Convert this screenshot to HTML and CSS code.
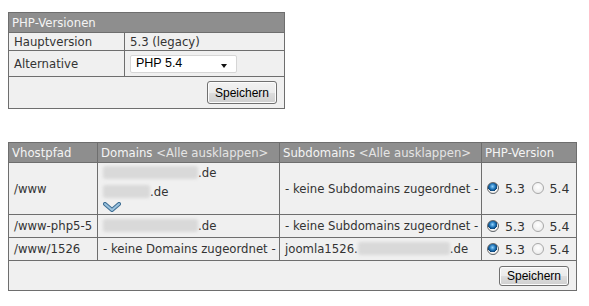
FILE: index.html
```html
<!DOCTYPE html>
<html lang="de">
<head>
    <meta charset="UTF-8">
    <title>PHP-Versionen</title>
    <link rel="stylesheet" href="styles.css">
</head>
<body>

    <table class="grid versions">
        <colgroup>
            <col class="v-label">
            <col class="v-value">
        </colgroup>
        <tr class="head">
            <th colspan="2">PHP-Versionen</th>
        </tr>
        <tr class="row-main">
            <td>Hauptversion</td>
            <td>5.3 (legacy)</td>
        </tr>
        <tr class="row-alt">
            <td>Alternative</td>
            <td>
                <div class="select">
                    <span>PHP 5.4</span>
                    <span class="caret"></span>
                </div>
            </td>
        </tr>
        <tr class="foot">
            <td colspan="2"><button class="btn">Speichern</button></td>
        </tr>
    </table>

    <table class="grid vhosts">
        <colgroup>
            <col class="c-path">
            <col class="c-dom">
            <col class="c-sub">
            <col class="c-php">
        </colgroup>
        <tr class="head">
            <th>Vhostpfad</th>
            <th>Domains <span class="toggle">&lt;Alle ausklappen&gt;</span></th>
            <th>Subdomains <span class="toggle">&lt;Alle ausklappen&gt;</span></th>
            <th>PHP-Version</th>
        </tr>
        <tr class="row-big">
            <td>/www</td>
            <td>
                <div class="dom"><span class="blur w95"></span>.de</div>
                <div class="dom"><span class="blur w47"></span>.de</div>
                <svg class="more" width="18" height="10" viewBox="0 0 18 10">
                    <path d="M2 2 L9 8 L16 2" fill="none" stroke="#3f6f94" stroke-width="4.2" stroke-linejoin="round" stroke-linecap="round"/>
                    <path d="M2 2 L9 8 L16 2" fill="none" stroke="#9cc3df" stroke-width="2" stroke-linejoin="round" stroke-linecap="round"/>
                </svg>
            </td>
            <td>- keine Subdomains zugeordnet -</td>
            <td>
                <label class="opt"><input type="radio" name="v1" checked> 5.3</label>
                <label class="opt"><input type="radio" name="v1"> 5.4</label>
            </td>
        </tr>
        <tr class="row">
            <td>/www-php5-5</td>
            <td><span class="blur w95"></span>.de</td>
            <td>- keine Subdomains zugeordnet -</td>
            <td>
                <label class="opt"><input type="radio" name="v2" checked> 5.3</label>
                <label class="opt"><input type="radio" name="v2"> 5.4</label>
            </td>
        </tr>
        <tr class="row">
            <td>/www/1526</td>
            <td>- keine Domains zugeordnet -</td>
            <td>joomla1526.<span class="blur w92"></span>.de</td>
            <td>
                <label class="opt"><input type="radio" name="v3" checked> 5.3</label>
                <label class="opt"><input type="radio" name="v3"> 5.4</label>
            </td>
        </tr>
        <tr class="foot">
            <td colspan="4"><button class="btn">Speichern</button></td>
        </tr>
    </table>

</body>
</html>
```

FILE: styles.css
```css
body {
    margin: 12px 8px 8px 8px;
    font-family: "DejaVu Sans", Verdana, sans-serif;
    font-size: 11.7px;
    color: #333;
    background: #fff;
}

.grid {
    border-collapse: collapse;
    table-layout: fixed;
    background: #f0f0f0;
    border: 1px solid #6e6e6e;
}

.grid td, .grid th {
    border: 1px solid #6e6e6e;
    padding: 0 5px;
    text-align: left;
    font-weight: normal;
    white-space: nowrap;
}

.grid .head th {
    background: #8e8e8e;
    color: #f4f4f4;
    height: 19px;
    padding: 0 3px;
}

.toggle {
    color: #e4e4e4;
}

.grid .foot td {
    text-align: right;
    padding-right: 7px;
}

/* top box */
.versions {
    width: 276px;
    margin-bottom: 33px;
}

.v-label { width: 116px; }
.v-value { width: 160px; }

.row-main td {
    height: 17px;
}

.row-alt td {
    height: 25px;
}

.versions .foot td {
    height: 31px;
}

.select {
    position: relative;
    width: 107px;
    height: 18px;
    box-sizing: border-box;
    background: #fff;
    border: 1px solid #d6d6d6;
    border-radius: 2px;
    font-family: "Liberation Sans", Arial, sans-serif;
    font-size: 12.5px;
    color: #000;
    line-height: 15px;
    padding-left: 5px;
}

.caret {
    position: absolute;
    right: 9px;
    top: 8px;
    border-left: 3.5px solid transparent;
    border-right: 3.5px solid transparent;
    border-top: 4px solid #111;
}

.btn {
    width: 70px;
    height: 23px;
    font-family: "Liberation Sans", Arial, sans-serif;
    font-size: 12px;
    color: #000;
    border: 1px solid #707070;
    border-radius: 3px;
    background: linear-gradient(#f2f2f2 0%, #ebebeb 50%, #dddddd 51%, #cfcfcf 100%);
    box-shadow: inset 0 0 0 1px #fcfcfc;
    padding: 0;
    vertical-align: middle;
}

/* vhost table */
.vhosts {
    width: 568px;
}

.c-path { width: 89px; }
.c-dom { width: 182px; }
.c-sub { width: 202px; }
.c-php { width: 95px; }

.row-big td {
    height: 51px;
}

.row td {
    height: 22px;
}

.vhosts .foot td {
    height: 29px;
}

.vhosts .foot .btn {
    height: 20px;
}

.dom {
    height: 19px;
    line-height: 19px;
}

.more {
    display: block;
    margin: 0 0 2px 0;
}

.blur {
    display: inline-block;
    height: 13px;
    vertical-align: -2px;
    background: #d9d9d9;
    border-radius: 3px;
    filter: blur(1.5px);
}

.w95 { width: 95px; }
.w47 { width: 47px; }
.w92 { width: 92px; }

.opt {
    margin-right: 3px;
    font-size: 12.5px;
    color: #333;
}

.opt input {
    appearance: none;
    -webkit-appearance: none;
    width: 12px;
    height: 12px;
    margin: 0 2px 0 0;
    vertical-align: -1px;
    border-radius: 50%;
    border: 1px solid #a8a8a8;
    background: radial-gradient(circle at 50% 40%, #ffffff 0%, #e6e6e6 100%);
    box-sizing: border-box;
}

.opt input:checked {
    border-color: #6a6a6a;
    background: radial-gradient(circle at 45% 35%, #8fd3ff 0%, #1b6fb3 35%, #0b3f6e 55%, #f5f5f5 58%, #dcdcdc 100%);
}
```
